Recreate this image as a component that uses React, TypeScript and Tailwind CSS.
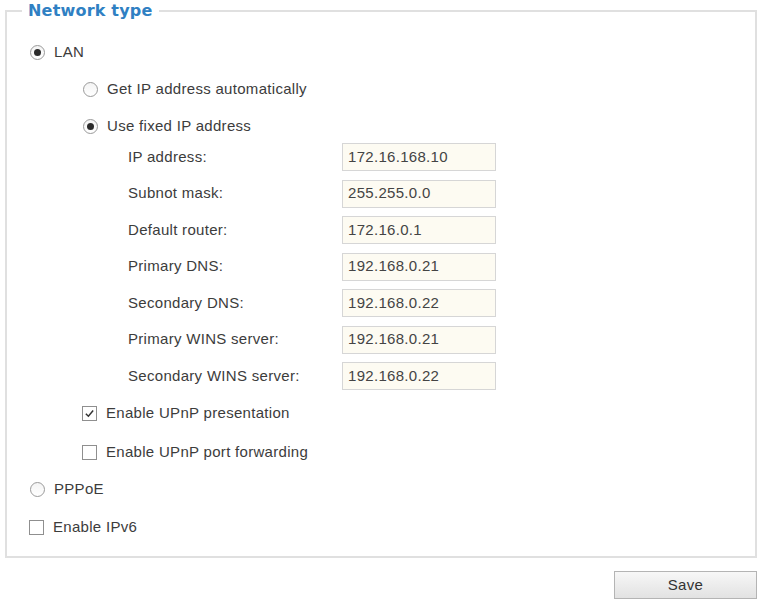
import React from "react";

const ipRows = [
  { label: "IP address:", value: "172.16.168.10" },
  { label: "Subnot mask:", value: "255.255.0.0" },
  { label: "Default router:", value: "172.16.0.1" },
  { label: "Primary DNS:", value: "192.168.0.21" },
  { label: "Secondary DNS:", value: "192.168.0.22" },
  { label: "Primary WINS server:", value: "192.168.0.21" },
  { label: "Secondary WINS server:", value: "192.168.0.22" },
];

const Radio = ({ checked }: { checked?: boolean }) => (
  <span className="flex h-[15px] w-[15px] shrink-0 items-center justify-center rounded-full border border-[#9a9a9a] bg-gradient-to-b from-[#f4f4f4] to-white">
    {checked && <span className="h-[7px] w-[7px] rounded-full bg-[#2b2b2b]" />}
  </span>
);

const Checkbox = ({ checked }: { checked?: boolean }) => (
  <span className="flex h-[15px] w-[15px] shrink-0 items-center justify-center border border-[#8f8f8f] bg-white">
    {checked && (
      <svg viewBox="0 0 12 12" className="h-[11px] w-[11px]" aria-hidden="true">
        <path d="M2 6.3 L4.8 9 L10 2.8" fill="none" stroke="#333" strokeWidth="1.6" />
      </svg>
    )}
  </span>
);

const Option = ({
  kind,
  checked,
  label,
  className,
}: {
  kind: "radio" | "check";
  checked?: boolean;
  label: string;
  className: string;
}) => (
  <div className={`flex h-5 items-center gap-[9px] ${className}`}>
    {kind === "radio" ? <Radio checked={checked} /> : <Checkbox checked={checked} />}
    <span>{label}</span>
  </div>
);

export default function App() {
  return (
    <div className="h-[601px] w-[759px] bg-white font-['Liberation_Sans',Arial,sans-serif] text-[15px] tracking-[0.3px] text-[#3c3c3c]">
      <fieldset className="ml-[5px] mt-[1px] w-[752px] border-2 border-[#e0e0e0] pb-[19px]">
        <legend className="ml-[15px] px-[6px] font-['DejaVu_Sans',Verdana,sans-serif] text-[16px] leading-[20px] font-bold tracking-[0.2px] text-[#2f80c3]">
          Network type
        </legend>
        <div className="flex flex-col pt-[21px]">
          <Option kind="radio" checked label="LAN" className="ml-[23px]" />
          <Option kind="radio" label="Get IP address automatically" className="ml-[76px] mt-[17px]" />
          <Option kind="radio" checked label="Use fixed IP address" className="ml-[76px] mt-[17px]" />

          <div className="ml-[121px] mt-[7px] flex flex-col gap-[8.5px]">
            {ipRows.map((row) => (
              <div key={row.label} className="flex items-center">
                <span className="w-[214px]">{row.label}</span>
                <div className="flex h-[28px] w-[154px] items-center border border-[#d6d6d6] bg-[#fdfbf2] pl-[5px] text-[#444]">
                  {row.value}
                </div>
              </div>
            ))}
          </div>

          <Option kind="check" checked label="Enable UPnP presentation" className="ml-[75px] mt-[13px]" />
          <Option kind="check" label="Enable UPnP port forwarding" className="ml-[75px] mt-[19px]" />
          <Option kind="radio" label="PPPoE" className="ml-[23px] mt-[17px]" />
          <Option kind="check" label="Enable IPv6" className="ml-[22px] mt-[18px]" />
        </div>
      </fieldset>
      <div className="flex justify-end pr-[2px] pt-[13px]">
        <button
          type="button"
          className="h-[28px] w-[143px] border border-[#b4b4b4] bg-gradient-to-b from-[#f7f7f7] to-[#e2e2e2] text-[15px] text-[#333]"
        >
          Save
        </button>
      </div>
    </div>
  );
}
